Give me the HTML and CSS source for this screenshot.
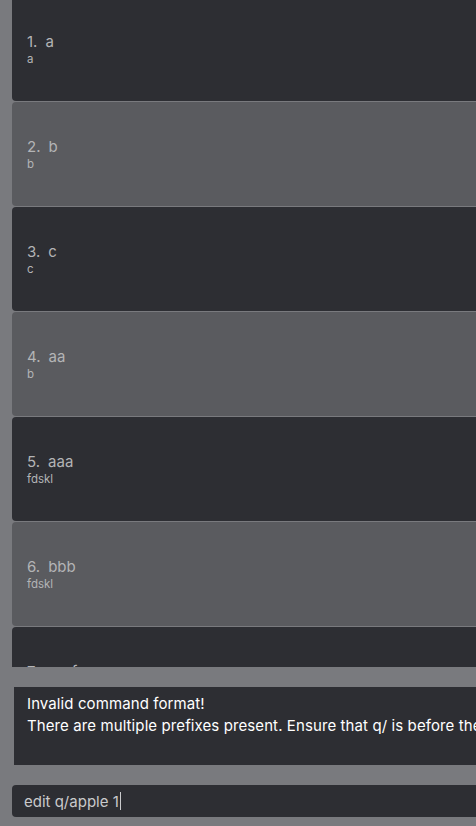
FILE: index.html
```html
<!DOCTYPE html>
<html>
<head>
<meta charset="utf-8">
<link rel="stylesheet" href="styles.css">
</head>
<body>
<div class="app">
  <div class="list-view">
    <div class="list-inner">
      <div class="card dark"><div class="title"><span class="idx">1.</span><span>a</span></div><div class="sub">a</div></div>
      <div class="card light"><div class="title"><span class="idx">2.</span><span>b</span></div><div class="sub">b</div></div>
      <div class="card dark"><div class="title"><span class="idx">3.</span><span>c</span></div><div class="sub">c</div></div>
      <div class="card light"><div class="title"><span class="idx">4.</span><span>aa</span></div><div class="sub">b</div></div>
      <div class="card dark"><div class="title"><span class="idx">5.</span><span>aaa</span></div><div class="sub">fdskl</div></div>
      <div class="card light"><div class="title"><span class="idx">6.</span><span>bbb</span></div><div class="sub">fdskl</div></div>
      <div class="card dark"><div class="title"><span class="idx">7.</span><span>cccf</span></div><div class="sub">fdskl</div></div>
    </div>
  </div>
  <div class="result">
    <div>Invalid command format!</div>
    <div class="nowrap">There are multiple prefixes present. Ensure that q/ is before the index.</div>
  </div>
  <div class="command"><span>edit q/apple 1</span><span class="caret"></span></div>
</div>
</body>
</html>
```
FILE: styles.css
```css
html, body {
  margin: 0;
  padding: 0;
  background: #797a7e;
  overflow: hidden;
}
body {
  width: 476px;
  height: 826px;
  font-family: Inter, "Open Sans", sans-serif;
}
.app {
  display: flex;
  flex-direction: column;
  height: 826px;
}
.list-view {
  height: 667px;
  overflow: hidden;
  padding-left: 12px;
  flex: none;
}
.list-inner {
  margin-top: -3px;
  display: flex;
  flex-direction: column;
  gap: 1px;
}
.card {
  height: 104px;
  border-radius: 4px 0 0 4px;
  box-sizing: border-box;
  padding: 35px 0 0 15px;
  flex: none;
}
.card.dark { background: #2d2e33; }
.card.light { background: #5a5b5f; }
.title {
  color: #b3b4b6;
  font-size: 15px;
  line-height: 20px;
  display: flex;
  gap: 8px;
}
.sub {
  color: #b3b4b6;
  font-size: 11.5px;
  line-height: 14px;
}
.result {
  margin: 20px 0 0 14px;
  height: 78px;
  box-sizing: border-box;
  background: #2d2e33;
  color: #ffffff;
  font-size: 15px;
  letter-spacing: 0.1px;
  line-height: 21.5px;
  padding: 6px 0 0 13px;
  overflow: hidden;
  flex: none;
}
.nowrap { white-space: nowrap; }
.command {
  margin: 20px 0 0 12px;
  height: 32px;
  box-sizing: border-box;
  background: #2d2e33;
  border-radius: 4px 0 0 4px;
  color: #c9cacc;
  font-size: 15px;
  display: flex;
  align-items: center;
  padding-left: 12px;
  flex: none;
}
.caret {
  display: inline-block;
  width: 1px;
  height: 18px;
  background: #c9cacc;
  margin-left: 1px;
}
```
